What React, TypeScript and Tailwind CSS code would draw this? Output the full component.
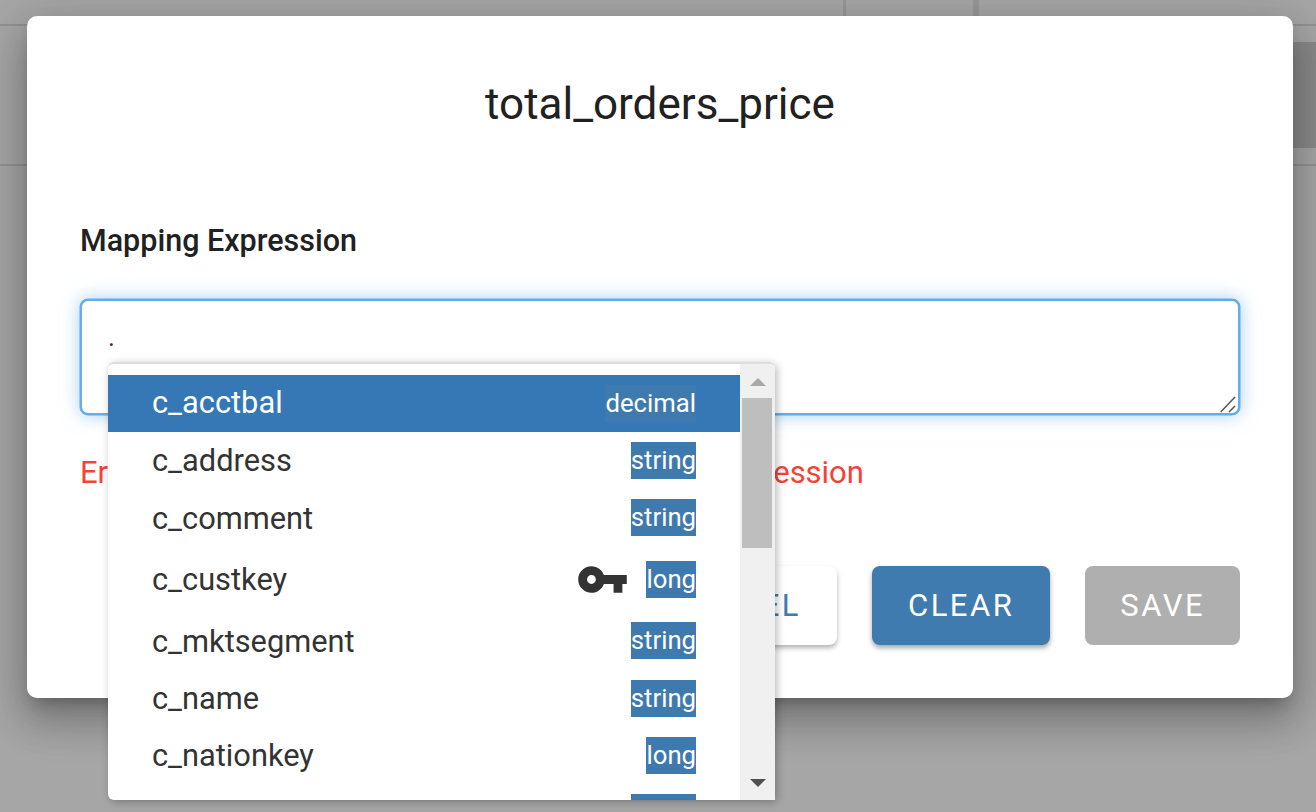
import React from "react";

const rows: { name: string; type: string; cls: string; nameCls: string; selected?: boolean; key?: boolean }[] = [
  { name: "c_acctbal", type: "decimal", cls: "h-[57px]", nameCls: "pt-0", selected: true },
  { name: "c_address", type: "string", cls: "h-[57px]", nameCls: "pt-px" },
  { name: "c_comment", type: "string", cls: "h-[62px]", nameCls: "pt-[2px]" },
  { name: "c_custkey", type: "long", cls: "h-[61px]", nameCls: "pt-px", key: true },
  { name: "c_mktsegment", type: "string", cls: "h-[58px]", nameCls: "pt-[2px]" },
  { name: "c_name", type: "string", cls: "h-[57px]", nameCls: "pt-px" },
  { name: "c_nationkey", type: "long", cls: "h-[57px]", nameCls: "pt-px" },
  { name: "c_phone", type: "string", cls: "h-[57px]", nameCls: "pt-px" },
];

function KeyIcon() {
  return (
    <svg viewBox="0 0 24 24" className="w-[53px] h-[53px] shrink-0 fill-[#333333]">
      <path d="M12.65 10C11.83 7.67 9.61 6 7 6c-3.31 0-6 2.69-6 6s2.69 6 6 6c2.61 0 4.83-1.67 5.65-4H17v4h4v-4h2v-4H12.65zM7 14c-1.1 0-2-.9-2-2s.9-2 2-2 2 .9 2 2-.9 2-2 2z" />
    </svg>
  );
}

function Dropdown() {
  return (
    <div className="absolute left-[28px] top-[63px] z-10 flex h-[438px] w-[667px] overflow-hidden rounded-[6px] rounded-br-none border-t-2 border-[#dddddd] bg-white shadow-[2px_2px_8px_rgba(0,0,0,0.28)]">
      <div className="w-[632px] shrink-0 overflow-hidden pt-[11px]">
        {rows.map((r) => (
          <div
            key={r.name}
            className={`flex items-start justify-between pl-[44px] pr-[44px] pt-[10px] ${r.cls} ${
              r.selected ? "bg-[#3578b5] text-white" : "text-[#333333]"
            }`}
          >
            <span className={`text-[30.8px] leading-[36px] ${r.nameCls}`}>{r.name}</span>
            <span className="flex items-center">
              {r.key && <span className="mr-[17px] -my-[8px] flex items-center"><KeyIcon /></span>}
              <span className="flex h-[37px] items-center bg-[#3f7aae] text-[25.7px] leading-[37px] text-white">{r.type}</span>
            </span>
          </div>
        ))}
      </div>
      <div className="flex w-[35px] shrink-0 flex-col items-center bg-[#f0f0f0]">
        <svg viewBox="0 0 16 8" className="mt-[14px] h-[8px] w-[16px] fill-[#a8a8a8]">
          <path d="M8 0 16 8H0z" />
        </svg>
        <div className="mt-[12px] ml-[2px] h-[150px] w-[30px] self-start bg-[#bebebe]" />
        <svg viewBox="0 0 16 8" className="mt-auto mb-[13px] h-[8px] w-[16px] fill-[#505050]">
          <path d="M0 0H16L8 8z" />
        </svg>
      </div>
    </div>
  );
}

export default function App() {
  return (
    <div className="relative h-[812px] w-[1316px] overflow-hidden bg-[#a6a6a6] font-['Roboto',sans-serif]">
      <div className="flex h-[26px] border-b-2 border-[#929292] pl-[843px]">
        <div className="h-full w-[133px] border-x-[3px] border-[#979797]" />
        <div className="h-full w-[3px] bg-[#979797]" />
      </div>
      <div className="flex h-[140px] justify-end border-b-2 border-[#929292] pt-[16px]">
        <div className="h-[106px] w-[23px] bg-[#8a8a8a]" />
      </div>

      <div className="absolute inset-0 pl-[27px] pt-[16px]">
        <div className="flex h-[682px] w-[1266px] flex-col rounded-[10px] bg-white px-[53px] shadow-[0_11px_15px_-7px_rgba(0,0,0,0.24),0_24px_38px_3px_rgba(0,0,0,0.18),0_9px_46px_8px_rgba(0,0,0,0.14)]">
          <h2 className="mt-[60px] h-[56px] text-center text-[44px] font-normal leading-[56px] text-[#212121]">
            total_orders_price
          </h2>
          <div className="mt-[90px] h-[38px] text-[30.5px] font-medium leading-[38px] text-[#212121]">Mapping Expression</div>
          <div className="relative mt-[39px] h-[116px]">
            <textarea
              defaultValue="."
              className="block h-[116px] w-full resize-none rounded-[8px] border-2 border-[#64ade8] bg-white px-[26px] py-[18px] text-[26px] leading-[36px] text-[#333333] shadow-[0_0_0_0.5px_#64ade8,0_0_18px_rgba(100,173,232,0.6)] outline-none"
            />
            <svg viewBox="0 0 18 18" className="pointer-events-none absolute bottom-[2px] right-[4px] h-[18px] w-[18px] stroke-[#555555]" fill="none" strokeWidth="1.5">
              <path d="M2.7 17 17 2M11 17 17 11" />
            </svg>
            <Dropdown />
          </div>
          <div className="mt-[38px] h-[40px] whitespace-nowrap text-[31px] leading-[40px] tracking-[-0.05px] text-[#f44336]">
            Errors occurred while validating your mapping expression
          </div>
          <div className="mt-[73px] flex justify-end gap-[35px]">
            <button className="h-[79px] rounded-[8px] bg-white px-[36px] pt-[2px] text-[31px] tracking-[2.5px] text-[#3f7bae] shadow-[0_3px_5px_rgba(0,0,0,0.3)]">CANCEL</button>
            <button className="h-[79px] rounded-[8px] bg-[#3f7bae] px-[36px] pt-[2px] text-[31px] tracking-[2.5px] text-white shadow-[0_3px_5px_rgba(0,0,0,0.35)]">CLEAR</button>
            <button className="h-[79px] rounded-[8px] bg-[#afafaf] px-[35px] pt-[2px] text-[31px] tracking-[2.5px] text-white">SAVE</button>
          </div>
        </div>
      </div>
    </div>
  );
}
